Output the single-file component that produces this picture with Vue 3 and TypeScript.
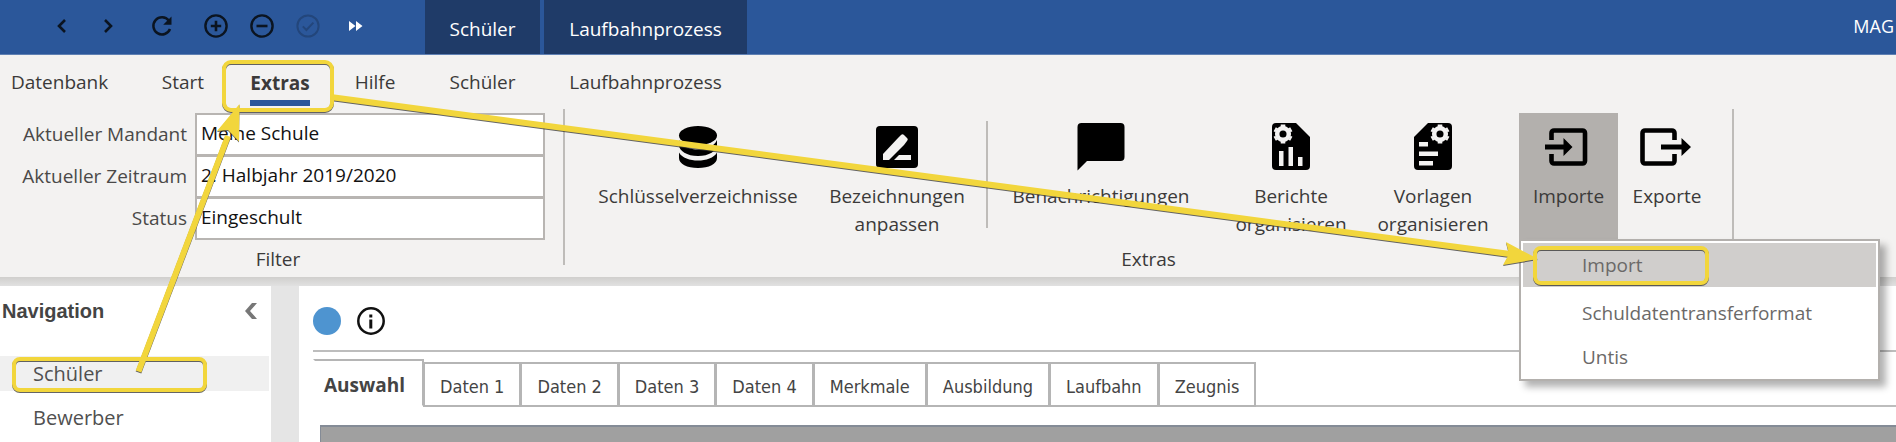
<script setup lang="ts">
import { ref } from 'vue'

interface Field { id: string; label: string; value: string }

const fields = ref<Field[]>([
  { id: 'mandant', label: 'Aktueller Mandant', value: 'Meine Schule' },
  { id: 'zeitraum', label: 'Aktueller Zeitraum', value: '2. Halbjahr 2019/2020' },
  { id: 'status', label: 'Status', value: 'Eingeschult' },
])
const menuItems: string[] = ['Import', 'Schuldatentransferformat', 'Untis']
const navItems: string[] = ['Schüler', 'Bewerber']
const tabs: string[] = ['Auswahl', 'Daten 1', 'Daten 2', 'Daten 3', 'Daten 4', 'Merkmale', 'Ausbildung', 'Laufbahn', 'Zeugnis']
const activeTab = ref('Auswahl')
const activeNav = ref('Schüler')
const highlighted = ref('Import')
</script>

<template>
  <div class="app">
    <header class="titlebar">
      <div class="quick">
        <button type="button" aria-label="Zurück">
          <svg width="24" height="24" viewBox="0 0 24 24"><path d="M15 6 9 12l6 6" fill="none" stroke="#0b1420" stroke-width="2.6" /></svg>
        </button>
        <button type="button" aria-label="Vor">
          <svg width="24" height="24" viewBox="0 0 24 24"><path d="m9 6 6 6-6 6" fill="none" stroke="#0b1420" stroke-width="2.6" /></svg>
        </button>
        <button type="button" aria-label="Aktualisieren" class="wide">
          <svg width="24" height="24" viewBox="0 0 24 24"><path d="M18.8 6.6A8.6 8.6 0 1 0 20 15" fill="none" stroke="#0b1420" stroke-width="2.5" /><path d="M21.5 2.5v8.3h-8.3z" fill="#0b1420" /></svg>
        </button>
        <button type="button" aria-label="Hinzufügen">
          <svg width="24" height="24" viewBox="0 0 24 24"><circle cx="12" cy="12" r="10.6" fill="none" stroke="#0b1420" stroke-width="2.4" /><path d="M6.8 12h10.4M12 6.8v10.4" stroke="#0b1420" stroke-width="2.6" /></svg>
        </button>
        <button type="button" aria-label="Entfernen">
          <svg width="24" height="24" viewBox="0 0 24 24"><circle cx="12" cy="12" r="10.6" fill="none" stroke="#0b1420" stroke-width="2.4" /><path d="M6.5 12h11" stroke="#0b1420" stroke-width="2.6" /></svg>
        </button>
        <button type="button" aria-label="Bestätigen" disabled>
          <svg width="24" height="24" viewBox="0 0 24 24"><circle cx="12" cy="12" r="10.6" fill="none" stroke="#23467b" stroke-width="2" /><path d="m6.800 12.400 3.600 3.600 7-7.400" fill="none" stroke="#23467b" stroke-width="2" /></svg>
        </button>
        <button type="button" aria-label="Mehr" class="more">
          <svg width="14" height="12" viewBox="0 0 14 12"><path d="M0 1v10l6.500-5zM7 1v10l6.500-5z" fill="#fff" /></svg>
        </button>
      </div>
      <div class="contexts">
        <div class="context ctx-a">Schüler</div>
        <div class="context ctx-b">Laufbahnprozess</div>
      </div>
      <div class="app-name">MAG</div>
    </header>

    <nav class="menubar">
      <button type="button" class="m-db">Datenbank</button>
      <button type="button" class="m-start">Start</button>
      <button type="button" class="m-extras"><span>Extras</span></button>
      <button type="button" class="m-hilfe">Hilfe</button>
      <button type="button" class="ctx-a">Schüler</button>
      <button type="button" class="ctx-b">Laufbahnprozess</button>
    </nav>

    <section class="ribbon">
      <div class="group filter">
        <div class="fields">
          <div v-for="f in fields" :key="f.id" class="field">
            <label :for="f.id">{{ f.label }}</label>
            <input :id="f.id" v-model="f.value" type="text">
          </div>
        </div>
        <div class="caption">Filter</div>
      </div>
      <div class="group extras">
        <div class="tools">
          <button type="button" class="tool t-keys">
            <svg width="48" height="48" viewBox="0 0 48 48">
              <ellipse cx="24" cy="12.500" rx="19" ry="9.500" />
              <path d="M5 17c3 7 12 9.500 19 9.500S40 24 43 17v5c0 6-8 11-19 11S5 28 5 22z" />
              <path d="M5 29.500C8 35 16 37.500 24 37.500S40 35 43 29.500V35c0 6-8 10-19 10S5 41 5 35z" />
            </svg>
            Schlüsselverzeichnisse
          </button>
          <button type="button" class="tool t-names">
            <svg width="48" height="48" viewBox="0 0 48 48">
              <rect x="3" y="3" width="42" height="42" rx="4" />
              <path d="M10 31v6h6l15-15 3-4c1-1.500 1-2 0-3l-3-3c-1-1-2-1-3 0l-3 3z" fill="#f3f2f1" />
              <path d="m21 37 5-5h12v5z" fill="#f3f2f1" />
            </svg>
            Bezeichnungen<br>anpassen
          </button>
          <div class="divider"></div>
          <button type="button" class="tool t-msg">
            <svg width="48" height="48" viewBox="0 0 48 48"><path d="M4.500 0h39a4 4 0 0 1 4 4v30a4 4 0 0 1-4 4H10L.5 47.500V4a4 4 0 0 1 4-4z" /></svg>
            Benachrichtigungen
          </button>
          <button type="button" class="tool t-reports">
            <svg width="48" height="48" viewBox="0 0 48 48">
              <path d="M9 0h20l14 14v29a4 4 0 0 1-4 4H9a4 4 0 0 1-4-4V4a4 4 0 0 1 4-4z" />
              <g transform="translate(16 11)"><circle r="5.800" fill="none" stroke="#f3f2f1" stroke-width="4.500" /><path d="M-6.500-3.800-8.300-4.800M-6.500 3.800-8.300 4.800M6.500-3.800 8.300-4.800M6.500 3.800 8.300 4.800M0-7v-2.500M0 7v2.500" stroke="#f3f2f1" stroke-width="4.600" /></g>
              <path d="M12 28h4.500v15H12zM21.500 24H26v19h-4.500zM31 34h4.500v9H31z" fill="#f3f2f1" />
            </svg>
            Berichte<br>organisieren
          </button>
          <button type="button" class="tool t-templates">
            <svg width="48" height="48" viewBox="0 0 48 48">
              <path d="M19 0h20a4 4 0 0 1 4 4v39a4 4 0 0 1-4 4H9a4 4 0 0 1-4-4V14z" />
              <g transform="translate(31 11)"><circle r="5.800" fill="none" stroke="#f3f2f1" stroke-width="4.500" /><path d="M-6.500-3.800-8.300-4.800M-6.500 3.800-8.300 4.800M6.500-3.800 8.300-4.800M6.500 3.800 8.300 4.800M0-7v-2.500M0 7v2.500" stroke="#f3f2f1" stroke-width="4.600" /></g>
              <path d="M10 19h9v4.500h-9zM10 28.500h19V33H10zM10 38h14v4.500H10z" fill="#f3f2f1" />
            </svg>
            Vorlagen<br>organisieren
          </button>
          <div class="dropdown">
            <button type="button" class="tool t-import" aria-haspopup="menu" aria-expanded="true">
              <svg width="48" height="48" viewBox="0 0 48 48">
                <path d="M6.500 17V10A2.500 2.500 0 0 1 9 7.500h28.500A2.500 2.500 0 0 1 40 10v28a2.500 2.500 0 0 1-2.500 2.500H9A2.500 2.500 0 0 1 6.500 38v-7" fill="none" stroke="#000" stroke-width="4.600" />
                <path d="M0 21.500h18.500V15l9 9-9 9v-6.500H0z" />
              </svg>
              Importe
            </button>
            <div class="menu" role="menu">
              <button v-for="item in menuItems" :key="item" type="button" role="menuitem" :class="{ hot: item === highlighted }" @mouseenter="highlighted = item">{{ item }}</button>
            </div>
          </div>
          <button type="button" class="tool t-export">
            <svg width="54" height="48" viewBox="0 0 54 48">
              <path d="M34.500 17V10A2.500 2.500 0 0 0 32 7.500H5A2.500 2.500 0 0 0 2.500 10v28A2.500 2.500 0 0 0 5 40.500h27a2.500 2.500 0 0 0 2.500-2.500v-7" fill="none" stroke="#000" stroke-width="4.600" />
              <path d="M21 21.500h20.500V15l9.500 9-9.500 9v-6.500H21z" />
            </svg>
            Exporte
          </button>
        </div>
        <div class="caption">Extras</div>
      </div>
    </section>

    <div class="edge"></div>

    <div class="body">
      <aside class="sidebar">
        <div class="side-head">
          <h2>Navigation</h2>
          <button type="button" aria-label="Navigation einklappen">
            <svg width="14" height="18" viewBox="0 0 14 18"><path d="M8 1h5L6 9l7 8H8L1 9z" fill="#777" /></svg>
          </button>
        </div>
        <ul>
          <li v-for="n in navItems" :key="n"><button type="button" :class="{ current: n === activeNav }" @click="activeNav = n">{{ n }}</button></li>
        </ul>
      </aside>
      <div class="splitter"></div>
      <main class="content">
        <div class="status">
          <svg width="28" height="28" viewBox="0 0 28 28"><circle cx="14" cy="14" r="14" fill="#4e94d0" /></svg>
          <svg width="28" height="28" viewBox="0 0 28 28"><circle cx="14" cy="14" r="12.700" fill="none" stroke="#111" stroke-width="2.500" /><path d="M12.300 7.500h3v3h-3zM12.300 12.500h3v9h-3z" fill="#111" /></svg>
        </div>
        <div class="tabs" role="tablist">
          <button v-for="t in tabs" :key="t" type="button" role="tab" :aria-selected="t === activeTab" :class="{ active: t === activeTab }" @click="activeTab = t">{{ t }}</button>
          <div class="rest"></div>
        </div>
        <div class="panel"></div>
      </main>
    </div>

    <svg class="marks" width="1896" height="442" viewBox="0 0 1896 442" aria-hidden="true">
      <g fill="none" stroke="#f2d63c" stroke-width="4">
        <rect x="224" y="62" width="108" height="48" rx="7" />
        <rect x="14" y="359" width="191" height="31" rx="6" />
        <rect x="1535" y="248" width="172" height="35" rx="6" />
      </g>
      <g stroke="#f2d63c" stroke-width="6">
        <path d="M138.500 371.500 228 136" />
        <path d="M330.500 97 1510 254" />
      </g>
      <g fill="#f2d63c">
        <path d="m239.500 104-.5 37.500-11-11.500-11 1z" />
        <path d="m1538 259-32-17 3 12-6 11z" />
      </g>
    </svg>
  </div>
</template>

<style>
body { margin: 0; background: #fff; overflow: hidden; }
</style>

<style scoped>
.app {
  position: relative;
  min-height: 100vh;
  display: flex;
  flex-direction: column;
  overflow: hidden;
  font: 19px/28px "Open Sans", "Noto Sans", sans-serif;
  color: #3b3a39;
  background: #fff;
}
button { font: inherit; color: inherit; background: none; border: 0; padding: 0; margin: 0; white-space: nowrap; }
svg { display: block; flex: none; }

.titlebar { display: flex; height: 54px; background: #2b579a; border-bottom: 1px solid #5f80b3; color: #fff; overflow: hidden; }
.quick { display: flex; align-items: center; width: 425px; flex: none; box-sizing: border-box; padding: 0 0 2px 39px; }
.quick button { width: 46px; display: flex; justify-content: center; }
.quick .wide { width: 62px; }
.quick .more { width: 50px; }
.contexts { display: flex; gap: 4px; }
.context { display: flex; align-items: center; justify-content: center; padding-top: 4px; background: #1f3b68; }
.ctx-a { width: 115px; flex: none; box-sizing: border-box; }
.ctx-b { width: 203px; flex: none; box-sizing: border-box; }
.app-name { margin-left: auto; padding-right: 2px; font-size: 18px; line-height: 52px; flex: none; }

.menubar { display: flex; height: 54px; background: #f3f2f1; align-items: center; }
.menubar .m-db { width: 131px; padding-left: 11px; text-align: left; box-sizing: border-box; }
.menubar .m-start { width: 104px; }
.menubar .m-extras { width: 90px; font-weight: 700; }
.m-extras span { display: inline-block; border-bottom: 6px solid #2b579a; line-height: 34px; margin-top: 8px; }
.menubar .m-hilfe { width: 100px; }
.menubar .ctx-b { margin-left: 4px; }

.ribbon { display: flex; background: #f3f2f1; height: 168px; }
.group { display: flex; flex-direction: column; flex: none; position: relative; }
.group::after { content: ""; width: 2px; height: 156px; background: #bebcb9; position: absolute; right: 0; top: 0; }
.caption { text-align: center; }
.filter { width: 565px; box-sizing: border-box; padding: 4px 0 0 11px; }
.fields { width: 534px; display: flex; flex-direction: column; margin-bottom: 6px; }
.field { display: flex; align-items: center; justify-content: space-between; height: 42px; }
.field label { flex: 1; text-align: right; padding-right: 8px; color: #4a4948; }
.field input { width: 350px; height: 43px; box-sizing: border-box; margin: 0 0 -1px; border: 2px solid #b8b5b2; padding: 0 4px 4px; font: inherit; color: #111; background: #fff; outline: 0; border-radius: 0; }
.filter .caption { padding-right: 20px; }
.extras { width: 1169px; }
.tools { display: flex; height: 132px; padding: 4px 0 0 22px; box-sizing: border-box; }
.extras .caption { margin-top: 4px; padding-right: 2px; }
.tool { display: flex; flex-direction: column; align-items: center; text-align: center; height: 126px; box-sizing: border-box; padding-top: 10px; }
.tool svg { margin-bottom: 11px; }
.t-keys { width: 222px; }
.t-names { width: 176px; }
.divider { width: 2px; height: 107px; margin: 8px 1px 0; background: #bebcb9; flex: none; }
.t-msg { width: 224px; }
.t-reports { width: 156px; }
.t-templates { width: 128px; margin-right: 22px; }
.t-import { width: 99px; background: #b3b0ad; }
.t-export { width: 98px; }
.dropdown { position: relative; }
.menu { position: absolute; z-index: 2; left: 0; top: 126px; width: 361px; box-sizing: border-box; border: 2px solid #b3b0ad; background: #fff; padding: 2px 2px 0; box-shadow: 6px 6px 7px rgba(0, 0, 0, 0.3); display: flex; flex-direction: column; }
.menu button { height: 44px; text-align: left; padding-left: 59px; color: #6b6968; }
.menu button:first-child { margin-bottom: 4px; }
.menu button.hot { background: #d0cecc; }

.edge { height: 9px; background: linear-gradient(#d0cfcd, #e1e1e1); flex: none; }

.body { display: flex; flex: 1; min-height: 0; }
.sidebar { width: 271px; flex: none; }
.side-head { display: flex; justify-content: space-between; align-items: center; padding: 11px 13px 0 2px; height: 28px; margin-bottom: 31px; }
.side-head h2 { margin: 0; font: 700 20px/28px "Liberation Sans", sans-serif; color: #444; }
.sidebar ul { list-style: none; margin: 0 2px 0 0; padding: 0; display: flex; flex-direction: column; gap: 9px; }
.sidebar li button { display: block; width: 100%; height: 35px; text-align: left; padding-left: 33px; font-size: 20px; color: #505050; }
.sidebar li .current { background: #f0f0f0; }
.splitter { width: 28px; flex: none; background: #e5e5e5; }
.content { flex: 1; min-width: 0; display: flex; flex-direction: column; padding-left: 14px; }
.status { display: flex; gap: 16px; padding: 21px 0 15px; border-bottom: 2px solid #bdbdbd; }
.tabs { display: flex; align-items: flex-end; margin-top: 7px; }
.tabs button { box-sizing: border-box; height: 45px; padding: 4px 15px 0; border: 2px solid #b5b5b5; margin-left: -1px; font-family: "DejaVu Sans Condensed", "DejaVu Sans", sans-serif; font-size: 18px; color: #444; }
.tabs .active { height: 48px; width: 111px; padding: 4px 0 0 9px; text-align: left; margin-left: 0; border-bottom-color: transparent; border-left-color: transparent; font-family: "Open Sans", sans-serif; font-size: 19px; font-weight: 700; }
.tabs .rest { flex: 1; height: 2px; background: #bdbdbd; }
.panel { flex: 1; min-height: 16px; margin: 18px 0 0 7px; background: #a0a0a0; border-top: 2px solid #848b96; border-left: 1px solid #848b96; }

.marks { position: absolute; left: 0; top: 0; z-index: 5; pointer-events: none; filter: drop-shadow(0 1px 0 rgba(50, 50, 50, 0.75)); }
</style>
